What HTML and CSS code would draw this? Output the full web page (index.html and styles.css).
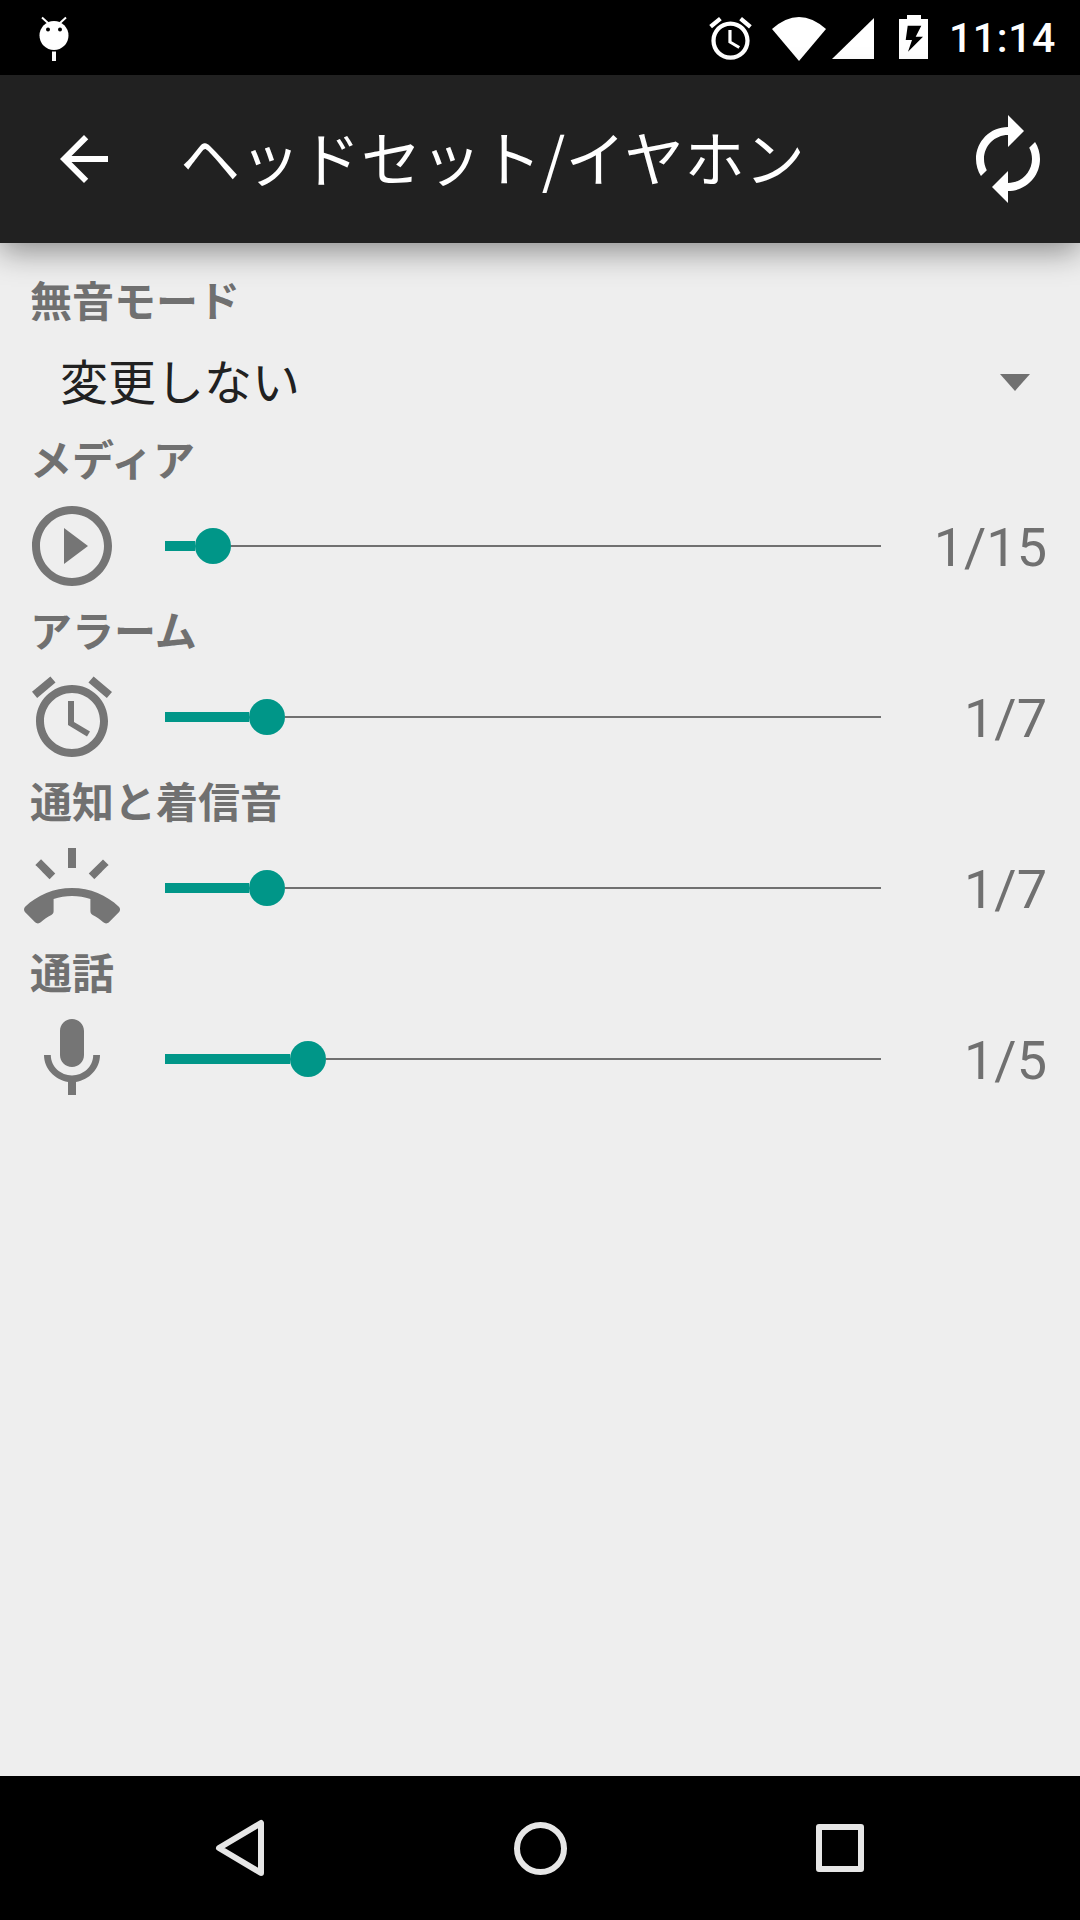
FILE: index.html
```html
<!DOCTYPE html>
<html lang="ja">
<head>
    <meta charset="UTF-8">
    <meta name="viewport" content="width=device-width, initial-scale=1.0">
    <title>ヘッドセット/イヤホン</title>
    <link rel="stylesheet" href="styles.css">
</head>
<body>
    <div class="status-bar">
        <svg class="status-bug" viewBox="0 0 38 50">
            <circle cx="19" cy="20.5" r="14.5" fill="#fff"/>
            <path d="M7 2.5l6 5.5M31 2.5l-6 5.5" stroke="#fff" stroke-width="2" fill="none"/>
            <circle cx="13" cy="14.5" r="2" fill="#000"/>
            <circle cx="25" cy="14.5" r="2" fill="#000"/>
            <rect x="17" y="36.5" width="4" height="9.5" fill="#fff"/>
        </svg>
        <div class="status-right">
            <svg class="status-alarm" viewBox="0 0 24 24">
                <path fill="#fff" d="M22 5.72l-4.6-3.86-1.29 1.53 4.6 3.86L22 5.72zM7.88 3.39L6.6 1.86 2 5.7l1.29 1.53 4.59-3.84zM12.5 8H11v6l4.75 2.85.75-1.23-4-2.37V8zM12 4c-4.97 0-9 4.03-9 9s4.03 9 9 9 9-4.03 9-9-4.03-9-9-9zm0 16c-3.87 0-7-3.13-7-7s3.13-7 7-7 7 3.13 7 7-3.13 7-7 7z"/>
            </svg>
            <svg class="status-wifi" viewBox="0 0 54 44">
                <path fill="#fff" d="M0 12Q27-12 54 12L27 44z"/>
            </svg>
            <svg class="status-signal" viewBox="0 0 42 41">
                <path fill="#fff" d="M0 41H42V0z"/>
            </svg>
            <svg class="status-battery" viewBox="0 0 29 44">
                <path fill="#fff" d="M8 0H22V4H29V44H0V4H8z"/>
                <path fill="#000" d="M8.7 10.7H22.3L16.7 21.7H24L9 36.7L13 25H6.7z"/>
            </svg>
            <span class="status-time">11:14</span>
        </div>
    </div>

    <div class="toolbar">
        <svg class="back-icon" viewBox="0 0 24 24">
            <path fill="#fff" d="M20 11H7.83l5.59-5.59L12 4l-8 8 8 8 1.41-1.41L7.83 13H20v-2z"/>
        </svg>
        <div class="toolbar-title">ヘッドセット/イヤホン</div>
        <svg class="sync-icon" viewBox="0 0 24 24">
            <path fill="#fff" transform="matrix(-1 0 0 1 24 0)" d="M12 4V1L8 5l4 4V6c3.31 0 6 2.69 6 6 0 1.01-.25 1.97-.7 2.8l1.46 1.46C19.54 15.03 20 13.57 20 12c0-4.42-3.58-8-8-8zm0 14c-3.31 0-6-2.69-6-6 0-1.01.25-1.97.7-2.8L5.24 7.74C4.46 8.97 4 10.43 4 12c0 4.42 3.58 8 8 8v3l4-4-4-4v3z"/>
        </svg>
    </div>

    <div class="content">
        <div class="label">無音モード</div>
        <div class="spinner">
            <span>変更しない</span>
            <div class="spinner-arrow"></div>
        </div>

        <div class="label">メディア</div>
        <div class="volume-row">
            <svg class="row-icon" viewBox="0 0 24 24">
                <path d="M10 16.5l6-4.5-6-4.5v9zM12 2C6.48 2 2 6.48 2 12s4.48 10 10 10 10-4.48 10-10S17.52 2 12 2zm0 18c-4.41 0-8-3.59-8-8s3.59-8 8-8 8 3.59 8 8-3.59 8-8 8z"/>
            </svg>
            <div class="slider">
                <div class="slider-fill" style="width: 30px"></div>
                <div class="slider-thumb"></div>
                <div class="slider-rest"></div>
            </div>
            <div class="value">1/15</div>
        </div>

        <div class="label">アラーム</div>
        <div class="volume-row">
            <svg class="row-icon" viewBox="0 0 24 24">
                <path d="M22 5.72l-4.6-3.86-1.29 1.53 4.6 3.86L22 5.72zM7.88 3.39L6.6 1.86 2 5.7l1.29 1.53 4.59-3.84zM12.5 8H11v6l4.75 2.85.75-1.23-4-2.37V8zM12 4c-4.97 0-9 4.03-9 9s4.03 9 9 9 9-4.03 9-9-4.03-9-9-9zm0 16c-3.87 0-7-3.13-7-7s3.13-7 7-7 7 3.13 7 7-3.13 7-7 7z"/>
            </svg>
            <div class="slider">
                <div class="slider-fill" style="width: 84px"></div>
                <div class="slider-thumb"></div>
                <div class="slider-rest"></div>
            </div>
            <div class="value">1/7</div>
        </div>

        <div class="label">通知と着信音</div>
        <div class="volume-row">
            <svg class="row-icon" viewBox="0 0 24 24">
                <path d="M23.71 16.67C20.66 13.78 16.54 12 12 12 7.46 12 3.34 13.78.29 16.67c-.18.18-.29.43-.29.71 0 .28.11.53.29.71l2.48 2.48c.18.18.43.29.71.29.27 0 .52-.11.7-.28.79-.74 1.69-1.36 2.66-1.85.33-.16.56-.5.56-.9v-3.1c1.45-.48 3-.73 4.6-.73s3.15.25 4.6.72v3.1c0 .39.23.74.56.9.98.49 1.87 1.12 2.67 1.85.18.18.43.28.7.28.28 0 .53-.11.71-.29l2.48-2.48c.18-.18.29-.43.29-.71 0-.28-.12-.52-.3-.7zM21.16 6.26l-1.41-1.41-3.56 3.55 1.41 1.41s3.45-3.52 3.56-3.55zM13 2h-2v5h2V2zM6.4 9.81L7.81 8.4 4.26 4.84 2.84 6.26c.11.03 3.56 3.55 3.56 3.55z"/>
            </svg>
            <div class="slider">
                <div class="slider-fill" style="width: 84px"></div>
                <div class="slider-thumb"></div>
                <div class="slider-rest"></div>
            </div>
            <div class="value">1/7</div>
        </div>

        <div class="label">通話</div>
        <div class="volume-row">
            <svg class="row-icon" viewBox="0 0 24 24">
                <path d="M12 14c1.66 0 3-1.34 3-3V5c0-1.66-1.34-3-3-3S9 3.34 9 5v6c0 1.66 1.34 3 3 3zm5.3-3c0 3-2.54 5.1-5.3 5.1S6.7 14 6.7 11H5c0 3.41 2.72 6.23 6 6.72V21h2v-3.28c3.28-.48 6-3.3 6-6.72h-1.7z"/>
            </svg>
            <div class="slider">
                <div class="slider-fill" style="width: 125px"></div>
                <div class="slider-thumb"></div>
                <div class="slider-rest"></div>
            </div>
            <div class="value">1/5</div>
        </div>
    </div>

    <div class="nav-bar">
        <svg class="nav-back" viewBox="0 0 50 58">
            <path d="M46 4V54L4 29z"/>
        </svg>
        <div class="nav-home"></div>
        <div class="nav-recent"></div>
    </div>
</body>
</html>
```

FILE: styles.css
```css
* {
    margin: 0;
    padding: 0;
    box-sizing: border-box;
    font-family: "Noto Sans CJK JP", "Noto Sans", sans-serif;
}

body {
    width: 1080px;
    height: 1920px;
    display: flex;
    flex-direction: column;
    background: #eeeeee;
    overflow: hidden;
}

.status-bar {
    height: 75px;
    background: #000;
    display: flex;
    align-items: center;
    justify-content: space-between;
    padding: 0 24px 0 35px;
}

.status-bug {
    width: 38px;
    height: 50px;
    margin-top: 4px;
}

.status-right {
    display: flex;
    align-items: center;
}

.status-alarm {
    width: 51px;
    height: 51px;
    margin-top: 1px;
}

.status-wifi {
    width: 54px;
    height: 44px;
    margin-left: 16px;
    margin-top: 2px;
}

.status-signal {
    width: 42px;
    height: 41px;
    margin-left: 6px;
    margin-top: 1px;
}

.status-battery {
    width: 29px;
    height: 44px;
    margin-left: 25px;
    margin-top: -1px;
}

.status-time {
    font-family: Roboto, sans-serif;
    font-size: 41px;
    font-weight: 500;
    letter-spacing: 0.6px;
    color: #fff;
    margin-left: 21px;
}

.toolbar {
    height: 168px;
    background: #212121;
    display: flex;
    align-items: center;
    padding-left: 48px;
    position: relative;
    box-shadow: 0 8px 30px rgba(0, 0, 0, 0.42);
}

.back-icon {
    width: 72px;
    height: 72px;
}

.toolbar-title {
    font-size: 60px;
    letter-spacing: 0.3px;
    color: #fff;
    margin-left: 60px;
    margin-bottom: 6px;
    flex: 1;
    line-height: 1;
}

.sync-icon {
    width: 96px;
    height: 96px;
    margin-right: 24px;
}

.content {
    flex: 1;
    padding-top: 27px;
}

.label {
    height: 57px;
    line-height: 57px;
    font-size: 42px;
    font-weight: 700;
    color: #707070;
    padding-left: 30px;
}

.label + .volume-row {
    margin-top: 3px;
}

.volume-row + .label {
    margin-top: -3px;
}

.spinner {
    height: 102px;
    display: flex;
    align-items: center;
    justify-content: space-between;
    padding: 2px 50px 0 60px;
    font-size: 48px;
    color: #212121;
}

.spinner-arrow {
    width: 0;
    height: 0;
    border-left: 15px solid transparent;
    border-right: 15px solid transparent;
    border-top: 17px solid #707070;
    margin-top: 6px;
}

.volume-row {
    height: 114px;
    display: flex;
    align-items: center;
    padding-left: 24px;
}

.row-icon {
    width: 96px;
    height: 96px;
    fill: #757575;
}

.slider {
    width: 716px;
    margin-left: 45px;
    display: flex;
    align-items: center;
}

.slider-fill {
    height: 10px;
    background: #009688;
}

.slider-thumb {
    width: 36px;
    height: 36px;
    border-radius: 50%;
    background: #009688;
}

.slider-rest {
    flex: 1;
    height: 2px;
    background: #707070;
}

.value {
    flex: 1;
    text-align: right;
    padding: 3px 33px 0 0;
    font-family: Roboto, sans-serif;
    font-size: 54px;
    color: #707070;
}

.nav-bar {
    height: 144px;
    background: #000;
    position: relative;
    display: flex;
    align-items: center;
    justify-content: space-between;
    padding: 0 216px 0 215px;
}

.nav-back {
    width: 50px;
    height: 58px;
    fill: none;
    stroke: #e6e6e6;
    stroke-width: 6;
    stroke-linejoin: round;
}

.nav-home {
    width: 53px;
    height: 53px;
    border: 6px solid #e6e6e6;
    border-radius: 50%;
}

.nav-recent {
    width: 48px;
    height: 48px;
    border: 6px solid #e6e6e6;
    border-radius: 3px;
}
```
